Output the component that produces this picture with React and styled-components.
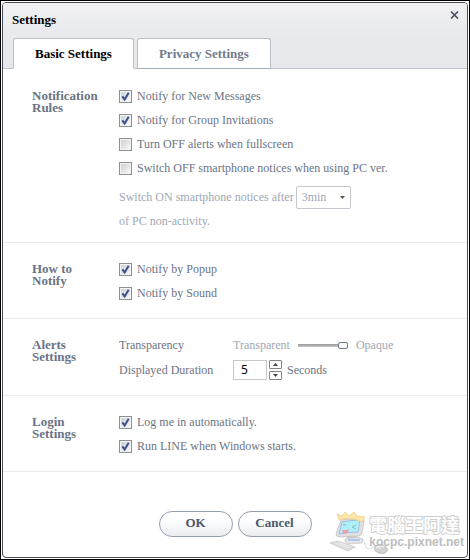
import React, { useState } from 'react';
import styled, { createGlobalStyle } from 'styled-components';


const GlobalStyle = createGlobalStyle`
    * {
        box-sizing: border-box;
    }

    body {
        margin: 0;
        background: #fff;
        color: #6b7485;
        font-family: 'Liberation Serif', serif;
        font-size: 12px;
        line-height: 24px;
    }

    button, input, select {
        margin: 0;
        font-family: inherit;
    }
`;


const Check = ({ id, label, defaultChecked }) => (
    <Row>
        <Tick type="checkbox" id={id} defaultChecked={defaultChecked} />
        <label htmlFor={id}>{label}</label>
    </Row>
)

const Duration = () => {
    const [seconds, setSeconds] = useState(5);

    return (
        <DurationRow>
            <FieldLabel htmlFor="duration">Displayed Duration</FieldLabel>
            <SecondsInput
                id="duration"
                value={seconds}
                onChange={(e) => setSeconds(Number(e.target.value) || 0)}
            />
            <Steppers>
                <Stepper type="button" aria-label="Increase" onClick={() => setSeconds(seconds + 1)}>
                    <svg width="5" height="3" viewBox="0 0 5 3"><path d="M0 3 L2.5 0 L5 3Z" fill="#444" /></svg>
                </Stepper>
                <Stepper type="button" aria-label="Decrease" onClick={() => setSeconds(Math.max(0, seconds - 1))}>
                    <svg width="5" height="3" viewBox="0 0 5 3"><path d="M0 0 L5 0 L2.5 3Z" fill="#444" /></svg>
                </Stepper>
            </Steppers>
            <span>Seconds</span>
        </DurationRow>
    )
}

const Mascot = () => (
    <svg width="60" height="44" viewBox="0 0 60 44">
        <path d="M33 28 C37 28 35 36 39 37 C43 38 42 34 46 35" fill="none" stroke="#c9deea" strokeWidth="1" />
        <ellipse cx="52" cy="37" rx="6.5" ry="4.5" transform="rotate(12 52 37)" fill="#d2d2d2" stroke="#b8b8b8" strokeWidth="0.8" />
        <path d="M47 36 Q50 33 55 35 M50 33 L51 37" fill="none" stroke="#f2f2f2" strokeWidth="1.2" />
        <path d="M1 31 L9 29 L26 35 L19 39Z" fill="#dedede" stroke="#c6c6c6" strokeWidth="0.8" />
        <path d="M6 31 L20 36 M9 30 L23 35" stroke="#efefef" strokeWidth="0.8" />
        <path d="M17 23 L28 23 L28 27 L18 27Z" fill="#cfcfcf" />
        <path d="M16 27 L29 25 L34 27 L33 31 L20 32 L16 30Z" fill="#e4e4e4" stroke="#c6c6c6" strokeWidth="0.7" />
        <path d="M19 28 L31 28" stroke="#9fc0f5" strokeWidth="1.5" />
        <path d="M12 8 L32 6 Q35 6 35 9 L33 21 Q32 24 29 24 L11 25 Q7 25 7 22Z" fill="#e0e0e0" stroke="#c2c2c2" strokeWidth="0.8" />
        <path d="M13 10 Q22 8 31 8 L29 20 Q19 20 10 22Z" fill="#aeeff8" stroke="#9db7e2" strokeWidth="0.9" />
        <path d="M10 8 L8 2 L13 4 L16 0 L20 4 L25 0 L28 4 L36 5 L33 10 Q22 4 10 8Z" fill="#fce6aa" stroke="#f0cc80" strokeWidth="0.7" />
        <path d="M14 13 Q16 11 17 14 M27 13 L23 15 L27 17" fill="none" stroke="#76b1c0" strokeWidth="0.8" />
        <path d="M13 18 Q17 19 20 17 L19 20 Q17 23 14 21Z" fill="#f29ca6" />
    </svg>
)

const App = () => {
    return (
        <>
            <GlobalStyle />
            <Frame>
                <Dialog>
                    <Header>
                        <TitleBar>
                            <h1>Settings</h1>
                            <Close type="button" aria-label="Close">
                                <svg width="9" height="8" viewBox="0 0 9 8">
                                    <path d="M1 0.5 L8 7.5 M8 0.5 L1 7.5" stroke="#4b4e5e" strokeWidth="1.6" />
                                </svg>
                            </Close>
                        </TitleBar>
                        <Tabs role="tablist">
                            <Tab type="button" role="tab" aria-selected="true" $active>Basic Settings</Tab>
                            <Tab type="button" role="tab" aria-selected="false">Privacy Settings</Tab>
                        </Tabs>
                    </Header>

                    <Section $compact>
                        <h2>Notification<br />Rules</h2>
                        <div>
                            <Check id="messages" label="Notify for New Messages" defaultChecked />
                            <Check id="groups" label="Notify for Group Invitations" defaultChecked />
                            <Check id="fullscreen" label="Turn OFF alerts when fullscreen" />
                            <Check id="pc" label="Switch OFF smartphone notices when using PC ver." />
                            <Delay>
                                <DelayRow>
                                    <label htmlFor="delay">Switch ON smartphone notices after</label>
                                    <SelectBox>
                                        <select id="delay" defaultValue="3" disabled>
                                            <option value="3">3min</option>
                                        </select>
                                        <svg width="5" height="3" viewBox="0 0 5 3"><path d="M0 0 L5 0 L2.5 3Z" fill="#555" /></svg>
                                    </SelectBox>
                                </DelayRow>
                                <div>of PC non-activity.</div>
                            </Delay>
                        </div>
                    </Section>

                    <Section>
                        <h2>How to<br />Notify</h2>
                        <div>
                            <Check id="popup" label="Notify by Popup" defaultChecked />
                            <Check id="sound" label="Notify by Sound" defaultChecked />
                        </div>
                    </Section>

                    <Section>
                        <h2>Alerts<br />Settings</h2>
                        <div>
                            <SliderRow>
                                <FieldLabel htmlFor="transparency">Transparency</FieldLabel>
                                <Muted>Transparent</Muted>
                                <Slider type="range" id="transparency" min="0" max="100" defaultValue="100" />
                                <Muted>Opaque</Muted>
                            </SliderRow>
                            <Duration />
                        </div>
                    </Section>

                    <Section>
                        <h2>Login<br />Settings</h2>
                        <div>
                            <Check id="login" label="Log me in automatically." defaultChecked />
                            <Check id="startup" label="Run LINE when Windows starts." defaultChecked />
                        </div>
                    </Section>

                    <Footer>
                        <Button type="button">OK</Button>
                        <Button type="button">Cancel</Button>
                    </Footer>

                    <Watermark>
                        <Mascot />
                        <WatermarkText>
                            <strong>電腦王阿達</strong>
                            <span>kocpc.pixnet.net</span>
                        </WatermarkText>
                    </Watermark>
                </Dialog>
            </Frame>
        </>
    )
}

export default App;


const Frame = styled.div`
    display: flex;
    min-height: 100vh;
    padding: 1px;
    border: 1px solid #000;
`;

const Dialog = styled.div`
    position: relative;
    display: flex;
    flex-direction: column;
    flex: 1;
    border: 1px solid #4c4c5c;
    border-radius: 4px;
    overflow: hidden;
`;

const Header = styled.header`
    height: 66px;
    padding: 0 10px;
    background: linear-gradient(#f1f1f3, #e6e8ec 40px);
    border-bottom: 1px solid #bfc4cc;
`;

const TitleBar = styled.div`
    display: flex;
    justify-content: space-between;
    height: 35px;

    h1 {
        margin: 5px 0 0 -1px;
        color: #000;
        font-size: 13px;
        line-height: 24px;
    }
`;

const Close = styled.button`
    display: flex;
    align-self: flex-start;
    margin-top: 8px;
    margin-right: -2px;
    padding: 0;
    border: 0;
    background: none;
`;

const Tabs = styled.div`
    display: flex;
    gap: 3px;
`;

const Tab = styled.button`
    height: 31px;
    padding: 0 21px;
    border: 1px solid #b9bfc8;
    border-bottom-color: ${props => props.$active ? '#fff' : '#a3abb8'};
    border-radius: 3px 3px 0 0;
    background: #fff;
    color: ${props => props.$active ? '#000' : '#727b8c'};
    font-size: 13px;
    font-weight: bold;
`;

const Section = styled.section`
    display: grid;
    grid-template-columns: 87px 1fr;
    padding: ${props => props.$compact ? '15px 29px 9px' : '14px 29px 13px'};
    border-bottom: 1px solid #ebebed;

    h2 {
        margin: 6px 0 0;
        color: #6b7485;
        font-size: 13px;
        line-height: 12px;
    }
`;

const Row = styled.div`
    display: flex;
    align-items: center;
    gap: 5px;
`;

const Tick = styled.input`
    appearance: none;
    width: 13px;
    height: 13px;
    border: 1px solid #8e8f8f;
    background: linear-gradient(135deg, #cfd2d6, #f6f6f6) content-box, #f4f4f4;
    padding: 1px;

    &:checked {
        background:
            url("data:image/svg+xml,%3Csvg xmlns='http://www.w3.org/2000/svg' viewBox='0 0 11 11'%3E%3Cpath d='M2.8 5.4 L4.8 8 L8.2 2.4' fill='none' stroke='%233c4f93' stroke-width='1.7'/%3E%3C/svg%3E") border-box,
            linear-gradient(135deg, #cfd2d6, #f6f6f6) content-box,
            #f4f4f4;
    }
`;

const Delay = styled.div`
    margin-top: 5px;
    color: #a0a8b5;
`;

const DelayRow = styled.div`
    display: flex;
    align-items: center;
    gap: 2px;
    height: 24px;
`;

const SelectBox = styled.div`
    position: relative;
    display: flex;

    select {
        appearance: none;
        width: 55px;
        height: 23px;
        padding: 0 5px;
        border: 1px solid #c5c9cf;
        border-radius: 2px;
        background: #fff;
        color: #a0a8b5;
        font-size: 12px;
        opacity: 1;
    }

    svg {
        position: absolute;
        top: 10px;
        right: 6px;
    }
`;

const FieldLabel = styled.label`
    width: 114px;
`;

const Muted = styled.span`
    color: #a0a8b5;
`;

const SliderRow = styled.div`
    display: flex;
    align-items: center;
`;

const Slider = styled.input`
    appearance: none;
    width: 50px;
    height: 8px;
    margin: 0 8px;
    background: linear-gradient(#9a9a9c, #c4c4c6) center / 100% 3px no-repeat;

    &::-webkit-slider-thumb {
        appearance: none;
        width: 10px;
        height: 7px;
        border: 1px solid #757b8f;
        border-radius: 2px;
        background: #f7f8fa;
    }
`;

const DurationRow = styled.div`
    display: flex;
    align-items: center;
    height: 25px;
`;

const SecondsInput = styled.input`
    width: 34px;
    height: 20px;
    padding: 0 7px;
    border: 1px solid #c8c8c8;
    color: #000;
    font-family: 'Noto Sans', sans-serif;
    font-size: 12px;
`;

const Steppers = styled.div`
    display: flex;
    flex-direction: column;
    gap: 2px;
    margin: 0 5px 0 2px;
`;

const Stepper = styled.button`
    display: flex;
    align-items: center;
    justify-content: center;
    width: 13px;
    height: 9px;
    padding: 0;
    border: 1px solid #858585;
    border-radius: 1px;
    background: #fff;
`;

const Footer = styled.footer`
    display: flex;
    justify-content: center;
    gap: 5px;
    padding: 39px 0 20px;
`;

const Button = styled.button`
    width: 74px;
    height: 26px;
    padding: 0 0 2px;
    border: 1px solid #939eae;
    border-radius: 13px;
    background: linear-gradient(#fff 30%, #e9edf0);
    color: #4d586c;
    font-size: 13px;
    font-weight: bold;
`;

const Watermark = styled.div`
    position: absolute;
    right: 3px;
    bottom: 1px;
    display: flex;

    svg {
        flex-shrink: 0;
    }
`;

const WatermarkText = styled.div`
    display: flex;
    flex-direction: column;
    margin-left: -20px;
    white-space: nowrap;

    strong {
        color: #fff;
        font-family: 'Noto Sans CJK TC', sans-serif;
        font-size: 18px;
        line-height: 24px;
        -webkit-text-stroke: 2px #d0d0d0;
        paint-order: stroke;
    }

    span {
        color: #bdbdbd;
        font-family: 'Liberation Sans', sans-serif;
        font-size: 12px;
        font-weight: bold;
        line-height: 12px;
    }
`;
